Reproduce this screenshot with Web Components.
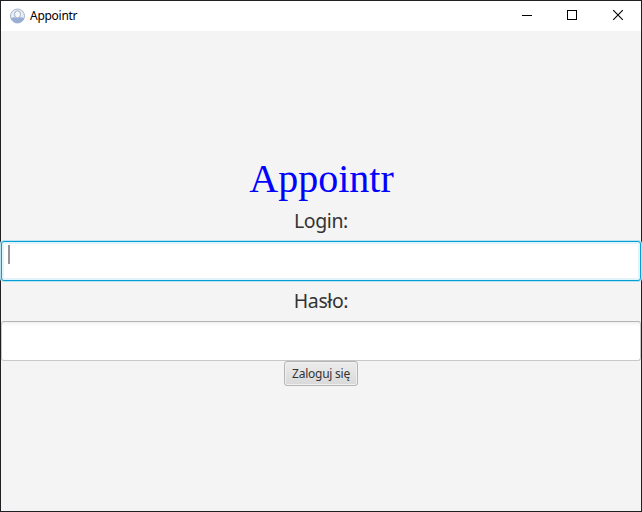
<!DOCTYPE html>
<html lang="pl">
<head>
<meta charset="utf-8">
<title>Appointr</title>
<style>
html, body { margin: 0; height: 100%; overflow: hidden; }
</style>
</head>
<body>
<app-window>
  <title-bar slot="bar">Appointr</title-bar>
  <login-form></login-form>
</app-window>
<script>
function define(name, html) {
  const t = document.createElement('template');
  t.innerHTML = html;
  customElements.define(name, class extends HTMLElement {
    constructor() {
      super();
      this.attachShadow({ mode: 'open' }).appendChild(t.content.cloneNode(true));
    }
  });
}

define('app-window', `
<style>
:host { display: flex; flex-direction: column; box-sizing: border-box; width: 642px; height: 512px;
  border: 1px solid #202024; background: #f4f4f4; font-family: "Noto Sans", "Open Sans", sans-serif; }
main { flex: 1; display: flex; flex-direction: column; }
</style>
<slot name="bar"></slot><main><slot></slot></main>`);

define('title-bar', `
<style>
:host { display: flex; align-items: center; height: 30px; background: #fff; color: #000;
  font-size: 12px; box-sizing: border-box; padding-left: 8px; }
.icon { width: 17px; height: 16px; margin-right: 4px; margin-top: -1px; }
.name { flex: 1; letter-spacing: -0.28px; line-height: 30px; }
.controls { display: flex; }
.controls svg { width: 46px; height: 30px; display: block; }
.controls svg:last-child { width: 45px; }
</style>
<svg class="icon" viewBox="0 0 17 16">
  <defs><clipPath id="c"><circle cx="8.5" cy="8" r="6.9"/></clipPath></defs>
  <circle cx="8.5" cy="8" r="7" fill="#e9eef5" stroke="#a9b5c9" stroke-width="1"/>
  <g clip-path="url(#c)" fill="#97add4">
    <path d="M0 16V11Q3 9.2 6.2 9.2Q8.5 11.5 10.8 9.2Q14 9.2 17 11V16Z"/>
  </g>
  <ellipse cx="8.5" cy="6.4" rx="3" ry="3.6" fill="#f6f8fb" stroke="#a0afc8" stroke-width="1"/>
</svg>
<span class="name"><slot></slot></span>
<div class="controls">
  <svg viewBox="0 0 46 30" shape-rendering="crispEdges"><path d="M18 14.5H28" stroke="#000"/></svg>
  <svg viewBox="0 0 46 30" shape-rendering="crispEdges"><path d="M18.5 9.5H27.5V18.5H18.5Z" fill="none" stroke="#000" transform="translate(-1 0)"/></svg>
  <svg viewBox="0 0 45 30"><path d="M17.2 9.2L26.8 18.8M26.8 9.2L17.2 18.8" stroke="#000" stroke-width="1.1"/></svg>
</div>`);

define('app-heading', `
<style>
:host { display: block; height: 46px; line-height: 46px; text-align: center; color: #00f; padding-left: 1px;
  font-family: "Liberation Serif", serif; font-size: 40px; }
</style><slot></slot>`);

define('field-label', `
<style>
:host { display: block; height: 40px; line-height: 40px; text-align: center; color: #333;
  font-size: 19.5px; letter-spacing: -0.4px; }
</style><slot></slot>`);

define('text-field', `
<style>
:host { display: block; box-sizing: border-box; height: 40px; border: 1px solid #c8c8c8; border-top-color: #b5b5b5;
  border-radius: 3px; background: linear-gradient(#f1f1f1, #fff 4px); padding: 3px 0 0 6px; }
:host([focused]) { border-color: #039ed3; background: #fff;
  box-shadow: 0 0 0 1px #b9e2f0, inset 0 0 0 2px #e3f3fa; }
.caret { display: none; width: 2px; height: 19px; background: #969696; }
:host([focused]) .caret { display: block; }
</style><div class="caret"></div>`);

define('push-button', `
<style>
:host { display: block; box-sizing: border-box; width: 74px; height: 25px; align-self: center;
  border: 1px solid #b5b5b5; border-radius: 3px; background: linear-gradient(#ececec, #d9d9d9);
  box-shadow: inset 0 0 0 1px #f0f0f0; text-align: center; line-height: 23px;
  font-size: 12px; letter-spacing: -0.25px; color: #333; white-space: nowrap; }
</style><slot></slot>`);

define('login-form', `
<style>
:host { display: flex; flex-direction: column; padding-top: 125px; }
.first { height: 39px; line-height: 38px; }
</style>
<app-heading>Appointr</app-heading>
<field-label class="first">Login:</field-label>
<text-field focused></text-field>
<field-label>Hasło:</field-label>
<text-field></text-field>
<push-button>Zaloguj się</push-button>`);
</script>
</body>
</html>
